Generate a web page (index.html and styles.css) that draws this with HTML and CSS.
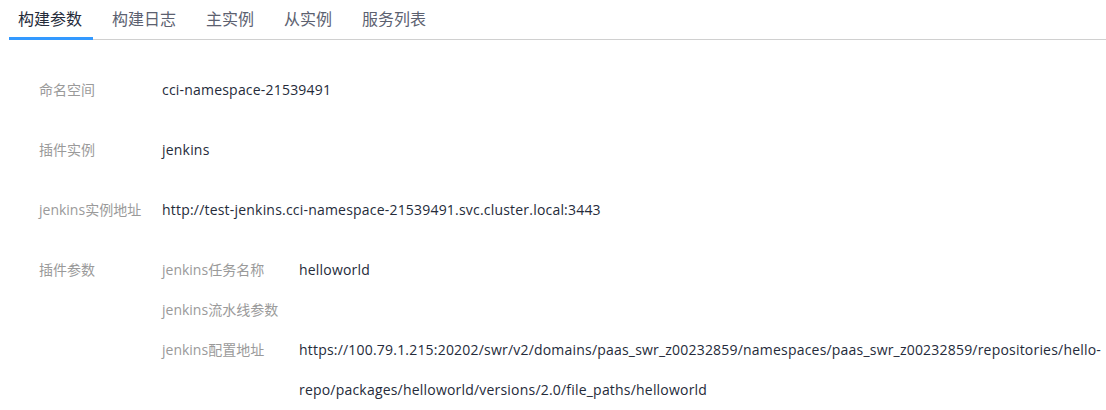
FILE: index.html
```html
<!DOCTYPE html>
<html lang="zh">
<head>
<meta charset="utf-8">
<link rel="stylesheet" href="styles.css">
</head>
<body>
<div class="page">
  <div class="tabs">
    <div class="tab active">构建参数</div>
    <div class="tab">构建日志</div>
    <div class="tab">主实例</div>
    <div class="tab">从实例</div>
    <div class="tab">服务列表</div>
  </div>
  <div class="details">
    <div class="row">
      <div class="label">命名空间</div>
      <div class="value">cci-namespace-21539491</div>
    </div>
    <div class="row">
      <div class="label">插件实例</div>
      <div class="value">jenkins</div>
    </div>
    <div class="row">
      <div class="label">jenkins实例地址</div>
      <div class="value">http://test-jenkins.cci-namespace-21539491.svc.cluster.local:3443</div>
    </div>
    <div class="row">
      <div class="label">插件参数</div>
      <div class="value nested">
        <div class="sub-row">
          <div class="sub-label">jenkins任务名称</div>
          <div class="sub-value">helloworld</div>
        </div>
        <div class="sub-row">
          <div class="sub-label">jenkins流水线参数</div>
          <div class="sub-value"></div>
        </div>
        <div class="sub-row">
          <div class="sub-label">jenkins配置地址</div>
          <div class="sub-value">https://100.79.1.215:20202/swr/v2/domains/paas_swr_z00232859/namespaces/paas_swr_z00232859/repositories/hello-repo/packages/helloworld/versions/2.0/file_paths/helloworld</div>
        </div>
      </div>
    </div>
  </div>
</div>
</body>
</html>
```
FILE: styles.css
```css
html, body {
  margin: 0;
  padding: 0;
  background: #fff;
}
body {
  font-family: "Open Sans", "Noto Sans CJK SC", sans-serif;
  font-size: 14px;
  color: #252b3a;
}
.page {
  padding-left: 9px;
}
.tabs {
  display: flex;
  gap: 10px;
  border-bottom: 1px solid #d0d0d0;
  height: 39px;
}
.tab {
  padding: 0 11px 0 9px;
  font-size: 16px;
  line-height: 39px;
  height: 39px;
  box-sizing: border-box;
  color: #5c6170;
}
.tab.active {
  color: #252b3a;
  border-bottom: 3px solid #3399ff;
  margin-bottom: -1px;
  height: 40px;
}
.details {
  padding-top: 20px;
  padding-left: 30px;
}
.row {
  display: flex;
  padding: 10px 0;
  line-height: 40px;
}
.label {
  width: 123px;
  flex: none;
  color: #9a9a9a;
}
.value {
  flex: 1;
  min-width: 0;
  padding-right: 4px;
  letter-spacing: 0.2px;
}
.value.nested {
  letter-spacing: 0;
}
.sub-row {
  display: flex;
}
.sub-label {
  width: 137px;
  flex: none;
  color: #9a9a9a;
}
.sub-value {
  flex: 1;
  min-width: 0;
  letter-spacing: 0.2px;
}
```
